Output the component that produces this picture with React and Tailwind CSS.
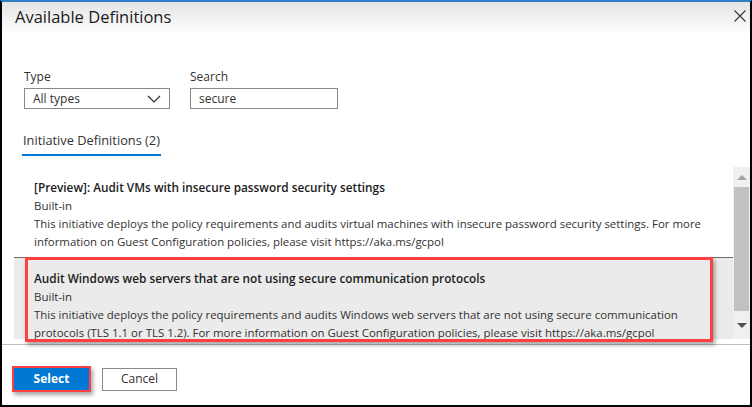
import { useState } from "react";

const font = { fontFamily: '"Open Sans", "Liberation Sans", sans-serif' };

function Chevron() {
  return (
    <svg width="14" height="8" viewBox="0 0 14 8" fill="none">
      <path d="M1 1l6 6 6-6" stroke="#323130" strokeWidth="1.2" />
    </svg>
  );
}

function CloseIcon() {
  return (
    <svg width="12" height="12" viewBox="0 0 12 12">
      <path d="M0.5 0.5l11 11M11.5 0.5l-11 11" stroke="#333" strokeWidth="1.1" />
    </svg>
  );
}

export default function App() {
  const [selected] = useState(1);

  const items = [
    {
      title: "[Preview]: Audit VMs with insecure password security settings",
      lines: [
        "This initiative deploys the policy requirements and audits virtual machines with insecure password security settings. For more",
        "information on Guest Configuration policies, please visit https://aka.ms/gcpol",
      ],
    },
    {
      title: "Audit Windows web servers that are not using secure communication protocols",
      lines: [
        "This initiative deploys the policy requirements and audits Windows web servers that are not using secure communication",
        "protocols (TLS 1.1 or TLS 1.2). For more information on Guest Configuration policies, please visit https://aka.ms/gcpol",
      ],
    },
  ];

  return (
    <div className="w-[752px] h-[407px] bg-white text-[#323130] overflow-hidden" style={font}>
      <div className="h-[407px] border-t-2 border-t-[#2f7fc8] border-l-2 border-r-2 border-b-2 border-l-black border-r-black border-b-black flex flex-col">
        {/* Header */}
        <div className="h-[32px] flex items-start justify-between pl-[13px] pr-[4px] bg-gradient-to-b from-[#e4e4e4] to-white">
          <h1 className="text-[16.5px] leading-[30px] text-[#1b1b1b]">Available Definitions</h1>
          <div className="pt-[8px]">
            <CloseIcon />
          </div>
        </div>

        {/* Filters */}
        <div className="flex gap-[20px] pl-[22px] mt-[35px]">
          <div className="flex flex-col">
            <span className="text-[12px] leading-[16px] mb-[3px]">Type</span>
            <div className="w-[146px] h-[21px] border border-[#8a8886] flex items-center justify-between pl-[8px] pr-[8px]">
              <span className="text-[12px] text-[#323130]">All types</span>
              <Chevron />
            </div>
          </div>
          <div className="flex flex-col">
            <span className="text-[12px] leading-[16px] mb-[3px]">Search</span>
            <div className="w-[148px] h-[21px] border border-[#8a8886] flex items-center pl-[8px]">
              <span className="text-[12px]">secure</span>
            </div>
          </div>
        </div>

        {/* Tab */}
        <div className="pl-[20px] mt-[18px]">
          <div className="inline-block">
            <div className="text-[12.8px] leading-[18px] px-[1px]">Initiative Definitions (2)</div>
            <div className="h-[2px] bg-[#0078d4] mt-[5px]" />
          </div>
        </div>

        {/* List */}
        <div className="flex mt-[11px] h-[172px] pl-[12px]">
          <div className="flex-1 flex flex-col">
            {items.map((it, i) => {
              const active = i === selected;
              return (
                <div
                  key={i}
                  className={
                    active
                      ? "relative bg-[#ebebeb] border-t border-[#6b6b6b] pl-[20px] pt-[11px] h-[82px]"
                      : "relative bg-white pl-[20px] pt-[11px] h-[90px]"
                  }
                >
                  {active && (
                    <div className="absolute left-[11px] top-[-1px] w-[688px] h-[85px] border-[3px] border-[#ff4040] shadow-[2px_3px_4px_rgba(0,0,0,0.35)] pointer-events-none" />
                  )}
                  <div className="text-[11.8px] leading-[18px] font-semibold text-[#1b1b1b] whitespace-nowrap">{it.title}</div>
                  <div className="text-[11.5px] leading-[18px] text-[#323130] mt-[1px]">Built-in</div>
                  <div className="text-[11.45px] leading-[18px] text-[#323130] whitespace-nowrap">
                    {it.lines[0]}
                    <br />
                    {it.lines[1]}
                  </div>
                </div>
              );
            })}
          </div>
          {/* Scrollbar */}
          <div className="w-[17px] bg-[#f0f0f0] flex flex-col items-center">
            <div className="h-[20px] flex items-center justify-center">
              <div className="w-0 h-0 border-l-[5px] border-r-[5px] border-b-[5px] border-l-transparent border-r-transparent border-b-[#a3a3a3]" />
            </div>
            <div className="w-[15px] h-[124px] bg-[#c1c1c1]" />
            <div className="flex-1 flex items-center justify-center">
              <div className="w-0 h-0 border-l-[5px] border-r-[5px] border-t-[5px] border-l-transparent border-r-transparent border-t-[#505050]" />
            </div>
          </div>
        </div>

        {/* Footer */}
        <div className="mt-[5px] border-t border-[#bdbdbd] flex items-center gap-[11px] pl-[10px] pt-[21px]">
          <div className="border-[2px] border-[#ff4040] shadow-[2px_3px_4px_rgba(0,0,0,0.35)]">
            <button className="w-[75px] h-[22px] bg-[#0078d4] text-white text-[12px] font-bold flex items-center justify-center">
              Select
            </button>
          </div>
          <button className="w-[75px] h-[23px] border border-[#8a8886] bg-white text-[12px] text-[#323130] flex items-center justify-center">
            Cancel
          </button>
        </div>
      </div>
    </div>
  );
}
